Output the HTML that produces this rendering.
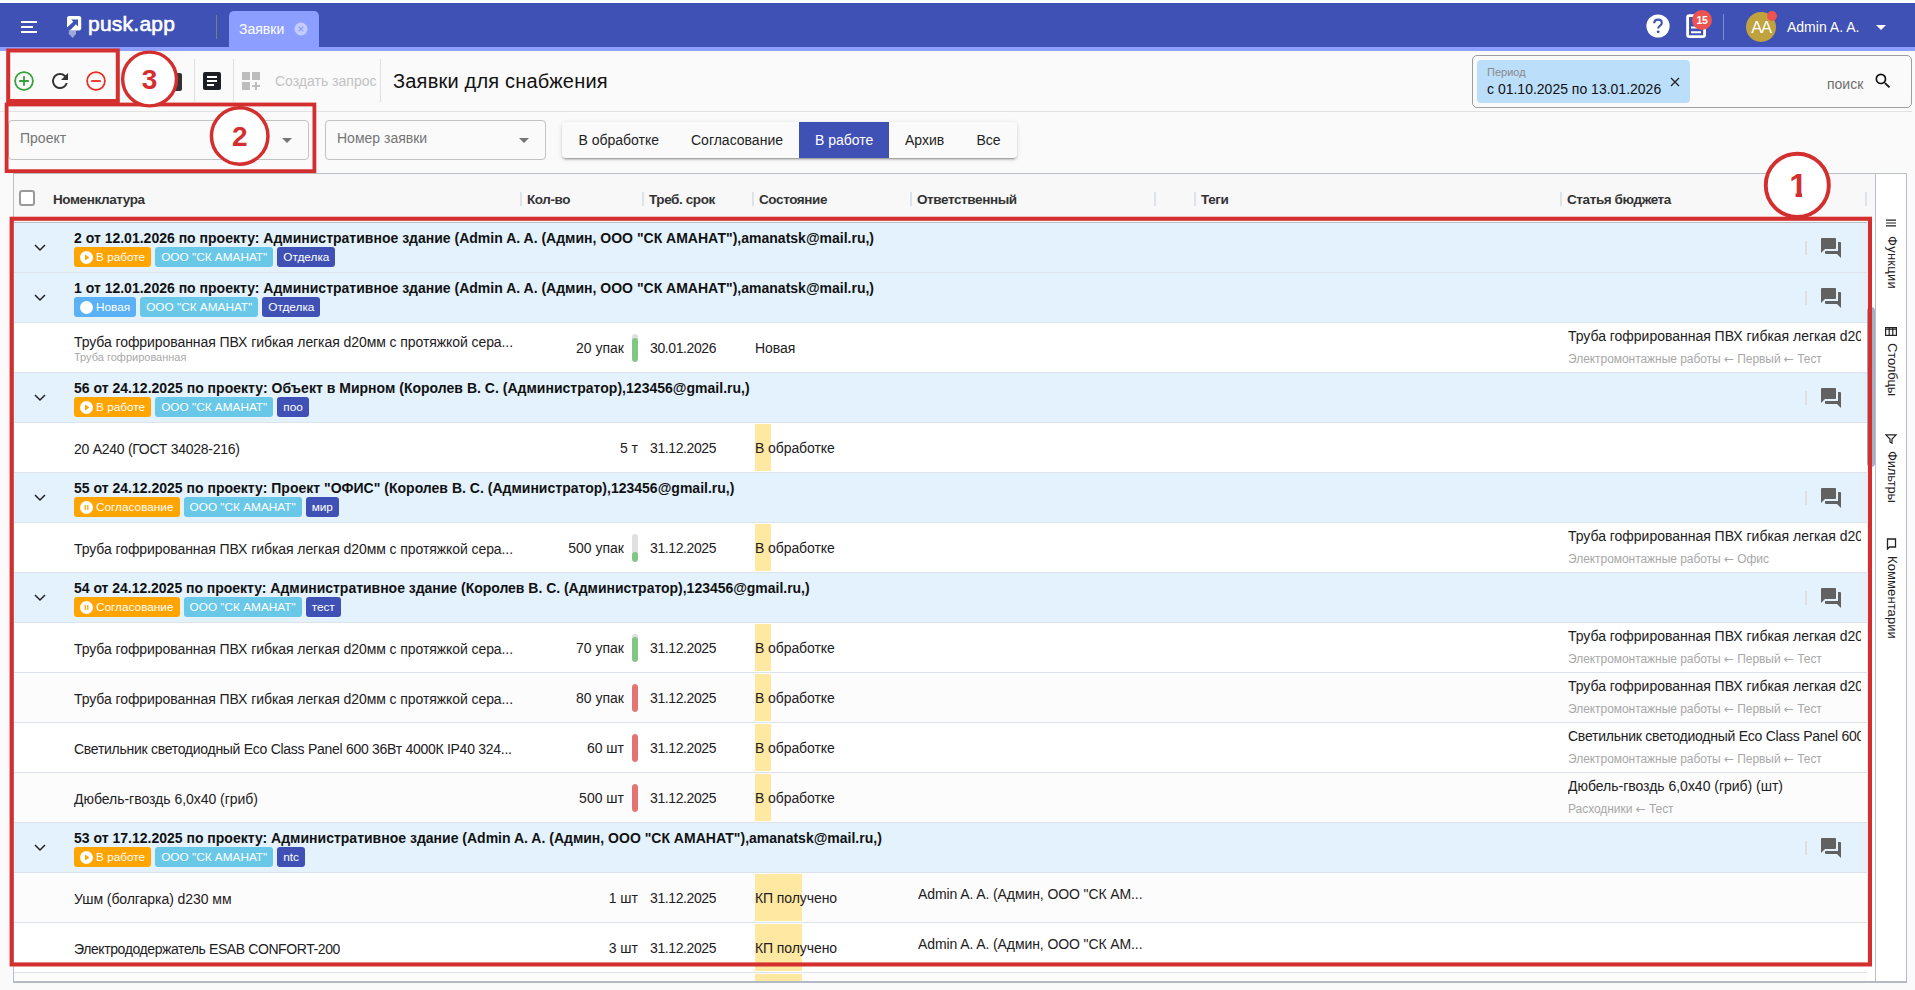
<!DOCTYPE html><html lang="ru"><head><meta charset="utf-8"><title>Заявки для снабжения</title><style>
*{box-sizing:border-box}
html,body{margin:0;padding:0;overflow:hidden}
body{width:1915px;height:990px;overflow:hidden;background:#fafafa;position:relative;font-family:"Liberation Sans",sans-serif;font-size:14px;color:#212121}
.abs{position:absolute}
#top{position:absolute;left:0;top:0;width:1915px;height:3px;background:#fff}
#hdr{position:absolute;left:0;top:3px;width:1915px;height:44px;background:#3f51b5}
#stripe{position:absolute;left:0;top:47px;width:1915px;height:4px;background:#8c9eff}
.t{position:absolute;white-space:nowrap;line-height:16px}
.w{color:#fff}
#tab{position:absolute;left:229px;top:11px;width:90px;height:37px;background:#8c9eff;border-radius:5px 5px 0 0}
.vd{position:absolute;width:1px;background:#e0e0e0}
#tbline{position:absolute;left:0;top:111px;width:1912px;height:1px;background:#e2e2e2}
.sel{position:absolute;height:40px;top:120px;border:1px solid #c2c2c2;border-radius:4px;background:#fafafa}
.arr{position:absolute;width:0;height:0;border-left:5px solid transparent;border-right:5px solid transparent;border-top:5px solid #757575}
#bg{position:absolute;left:562px;top:122px;width:455px;height:36px;background:#fafafa;border-radius:4px;box-shadow:0 3px 1px -2px rgba(0,0,0,.2),0 2px 2px 0 rgba(0,0,0,.14),0 1px 5px 0 rgba(0,0,0,.12)}
#bg .on{position:absolute;left:237px;top:0;width:90px;height:36px;background:#3f51b5}
#grid{position:absolute;left:13px;top:173px;width:1894px;height:810px;border:1px solid #babfc7;border-bottom:2px solid #b4bac4;background:#fff;overflow:hidden}
#gh{position:absolute;left:0;top:0;width:1861px;height:49px;background:#f8f8f8;border-bottom:1px solid #babfc7}
.hs{position:absolute;top:18px;width:2px;height:14px;background:#dde2eb}
.ht{position:absolute;top:18px;font-weight:700;font-size:13.5px;letter-spacing:-0.4px;line-height:16px;color:#333;white-space:nowrap}
.row{position:absolute;left:0;width:1853px;height:50px;border-bottom:1px solid #dde2eb;background:#fff;font-family:"Liberation Sans",sans-serif}
.row.alt{background:#fcfcfc}
.row.g{background:#e3f2fd}
.gt{position:absolute;left:60px;top:7px;font-weight:700;font-size:14px;line-height:16px;white-space:nowrap;color:#111}
.bd{position:absolute;top:25px;height:20px;border-radius:3px;color:#fff;font-size:11.8px;line-height:20px;white-space:nowrap;padding:0 6px}
.b-w{background:#ffa400}
.b-n{background:#5bb1f6}
.b-c{background:#69c8e8}
.b-t{background:#3f51b5}
.ic{display:inline-block;vertical-align:top;width:13px;height:13px;border-radius:50%;background:#fff;margin:3.5px 3.5px 0 -0.5px;position:relative}
.c{position:absolute;white-space:nowrap;font-size:14px;line-height:16px;color:#1c2022;overflow:hidden}
.sub{position:absolute;white-space:nowrap;color:#a8a8a8;overflow:hidden}
.bar{position:absolute;left:618px;top:11px;width:6px;height:28px;border-radius:3px;background:#e0e0e0;overflow:hidden}
.bar i{position:absolute;left:0;bottom:0;width:6px;border-radius:3px}
.hl{position:absolute;left:741px;top:1px;height:46.5px;background:#ffe8a1}
.msep{position:absolute;left:1791px;top:18px;width:2px;height:14px;background:#e3dede}
#side{position:absolute;left:1861px;top:0;width:31px;height:807px;border-left:1px solid #babfc7;background:#fff}
.sv{position:absolute;left:1px;width:30px;writing-mode:vertical-rl;font-size:13px;line-height:30px;color:#222;white-space:nowrap}
.rb{position:absolute;border:4px solid #d32f2f}
.rc{position:absolute;border:3.6px solid #d32f2f;border-radius:50%;background:#fff;color:#d32f2f;font-weight:700;text-align:center}
</style></head><body>
<div id="top"></div><div id="hdr"></div><div id="stripe"></div>
<div class="abs" style="left:21px;top:21px;width:16px;height:2px;background:#fff"></div>
<div class="abs" style="left:21px;top:26px;width:12px;height:2px;background:#fff"></div>
<div class="abs" style="left:21px;top:31px;width:16px;height:2px;background:#fff"></div>
<svg class="abs" style="left:66px;top:15px" width="18" height="24" viewBox="0 0 18 24"><path d="M3.5 15.5 L10 15.5 L10 19 L6.5 23 L2.5 18.5 Z" fill="#9fa8da"/><rect x="1" y="1" width="14.2" height="14.5" rx="2.2" fill="#fff"/><path d="M5.2 4.6 L12 4.6 L12 11.4 L9.9 9.3 L5.2 14.2 L3.2 15.5 L1 15.5 L1 12.4 L7.3 6.7 Z" fill="#3f51b5"/></svg>
<div class="t w" style="left:88px;top:12px;font-size:21px;line-height:24px;font-weight:400;-webkit-text-stroke:0.6px #fff;letter-spacing:0.25px">pusk.app</div>
<div class="abs" style="left:216px;top:15px;width:1px;height:24px;background:#6f8478"></div>
<div id="tab"></div>
<div class="t w" style="left:239px;top:21px;font-size:14px">Заявки</div>
<svg class="abs" style="left:294px;top:22px" width="14" height="14" viewBox="0 0 14 14"><circle cx="7" cy="7" r="6.5" fill="#c5cdff"/><path d="M4.6 4.6 L9.4 9.4 M9.4 4.6 L4.6 9.4" stroke="#8c9eff" stroke-width="1.3"/></svg>
<svg class="abs" style="left:1646px;top:14px" width="24" height="24" viewBox="0 0 24 24"><circle cx="12" cy="12" r="11.6" fill="#fff"/><path d="M8.2 9.3 C8.2 6.9 9.9 5.6 12 5.6 C14.2 5.6 15.8 7 15.8 8.9 C15.8 11.6 12.2 11.9 12.2 14.6" fill="none" stroke="#3f51b5" stroke-width="2.1"/><circle cx="12.2" cy="17.8" r="1.4" fill="#3f51b5"/></svg>
<svg class="abs" style="left:1685px;top:13px" width="24" height="26" viewBox="0 0 24 26"><rect x="2.6" y="2.6" width="17" height="21" rx="1.8" fill="none" stroke="#fff" stroke-width="2.8"/><path d="M6 14.5 H16 M6 19.3 H16" stroke="#fff" stroke-width="2"/></svg>
<div class="abs" style="left:1692px;top:10px;width:20px;height:20px;border-radius:50%;background:#ef5350"></div>
<div class="t w" style="left:1692px;top:12px;width:20px;text-align:center;font-size:10.5px;font-weight:700;letter-spacing:-0.3px">15</div>
<div class="abs" style="left:1723px;top:14px;width:1px;height:26px;background:#7f8bd0"></div>
<div class="abs" style="left:1746px;top:12px;width:30px;height:30px;border-radius:50%;background:#c0a23e"></div>
<div class="t w" style="left:1746px;top:18px;width:30px;text-align:center;font-size:16.5px;line-height:18px;letter-spacing:-1.2px">AA</div>
<div class="abs" style="left:1767px;top:11px;width:10px;height:10px;border-radius:50%;background:#ef5350"></div>
<div class="t w" style="left:1787px;top:19px;font-size:14px">Admin A. A.</div>
<div class="abs" style="left:1876px;top:25px;width:0;height:0;border-left:5px solid transparent;border-right:5px solid transparent;border-top:5px solid #fff"></div>
<svg class="abs" style="left:12px;top:69px" width="24" height="24" viewBox="0 0 24 24"><circle cx="12" cy="12" r="8.9" fill="none" stroke="#34a03c" stroke-width="1.7"/><path d="M12 7.2 V16.8 M7.2 12 H16.8" stroke="#34a03c" stroke-width="1.8"/></svg>
<svg class="abs" style="left:48px;top:69px" width="24" height="24" viewBox="0 0 24 24"><path d="M17.65 6.35A7.958 7.958 0 0 0 12 4a8 8 0 1 0 7.73 10h-2.08A5.99 5.99 0 0 1 12 18c-3.31 0-6-2.69-6-6s2.69-6 6-6c1.66 0 3.14.69 4.22 1.78L13 11h7V4l-2.35 2.35z" fill="#333"/></svg>
<svg class="abs" style="left:84px;top:69px" width="24" height="24" viewBox="0 0 24 24"><circle cx="12" cy="12" r="8.9" fill="none" stroke="#f3281d" stroke-width="1.7"/><path d="M7.2 12 H16.8" stroke="#f3281d" stroke-width="1.8"/></svg>
<svg class="abs" style="left:160.8px;top:69.5px" width="24" height="24" viewBox="0 0 24 24"><path d="M19 3h-4.18C14.4 1.84 13.3 1 12 1s-2.4.84-2.82 2H5c-1.1 0-2 .9-2 2v14c0 1.1.9 2 2 2h14c1.1 0 2-.9 2-2V5c0-1.1-.9-2-2-2zm-7 0c.55 0 1 .45 1 1s-.45 1-1 1-1-.45-1-1 .45-1 1-1z" fill="#333"/></svg>
<div class="vd" style="left:194px;top:59px;height:43px"></div>
<div class="vd" style="left:233px;top:59px;height:43px"></div>
<div class="vd" style="left:380px;top:59px;height:43px"></div>
<svg class="abs" style="left:199.6px;top:69px" width="24" height="24" viewBox="0 0 24 24"><rect x="3" y="3" width="18" height="18" rx="2" fill="#1b1e22"/><path d="M7 8 H17 M7 12 H17 M7 16 H14" stroke="#fff" stroke-width="2"/></svg>
<svg class="abs" style="left:239px;top:69px" width="24" height="24" viewBox="0 0 24 24"><path d="M3 3h8v8H3zM13 3h8v8h-8zM3 13h8v8H3zM18 13h-2v3h-3v2h3v3h2v-3h3v-2h-3z" fill="#bdbdbd"/></svg>
<div class="t" style="left:275px;top:73px;font-size:14px;color:#c2c2c2">Создать запрос</div>
<div class="t" style="left:393px;top:69px;font-size:20px;line-height:24px;color:#111;letter-spacing:0.2px">Заявки для снабжения</div>
<div class="abs" style="left:1472px;top:55px;width:440px;height:53px;border:1px solid #9e9e9e;border-radius:5px"></div>
<div class="abs" style="left:1477px;top:60px;width:213px;height:43px;border-radius:4px;background:#bbdefb"></div>
<div class="t" style="left:1487px;top:65px;font-size:11px;line-height:14px;color:#8a8a8a">Период</div>
<div class="t" style="left:1487px;top:81px;font-size:14px;color:#111">с 01.10.2025 по 13.01.2026</div>
<svg class="abs" style="left:1670px;top:77px" width="10" height="10" viewBox="0 0 10 10"><path d="M1 1 L9 9 M9 1 L1 9" stroke="#222" stroke-width="1.3"/></svg>
<div class="t" style="left:1827px;top:76px;font-size:14px;color:#6e6e6e">поиск</div>
<svg class="abs" style="left:1872.5px;top:71px" width="20" height="20" viewBox="0 0 24 24"><path d="M15.5 14h-.79l-.28-.27A6.471 6.471 0 0 0 16 9.5 6.5 6.5 0 1 0 9.5 16c1.61 0 3.09-.59 4.23-1.57l.27.28v.79l5 4.99L20.49 19l-4.99-5zm-6 0C7.01 14 5 11.99 5 9.5S7.01 5 9.5 5 14 7.01 14 9.5 11.99 14 9.5 14z" fill="#111"/></svg>
<div id="tbline"></div>
<div class="sel" style="left:8px;width:301px"></div>
<div class="t" style="left:20px;top:130px;color:#757575">Проект</div>
<div class="arr" style="left:282px;top:138px"></div>
<div class="sel" style="left:325px;width:221px"></div>
<div class="t" style="left:337px;top:130px;color:#757575">Номер заявки</div>
<div class="arr" style="left:519px;top:138px"></div>
<div id="bg"><div class="on"></div></div>
<div class="t" style="left:578.5px;top:132px;color:#222">В обработке</div>
<div class="t" style="left:691px;top:132px;color:#222">Согласование</div>
<div class="t" style="left:815px;top:132px;color:#fff">В работе</div>
<div class="t" style="left:905px;top:132px;color:#222">Архив</div>
<div class="t" style="left:976.5px;top:132px;color:#222">Все</div>
<div id="grid">
<div id="gh"></div>
<div class="abs" style="left:5px;top:16px;width:16px;height:16px;border:2px solid #999;border-radius:3px;background:#fff"></div>
<div class="hs" style="left:506px"></div>
<div class="hs" style="left:628px"></div>
<div class="hs" style="left:738px"></div>
<div class="hs" style="left:896px"></div>
<div class="hs" style="left:1140px"></div>
<div class="hs" style="left:1180px"></div>
<div class="hs" style="left:1546px"></div>
<div class="hs" style="left:1851px"></div>
<div class="ht" style="left:39px">Номенклатура</div>
<div class="ht" style="left:513px">Кол-во</div>
<div class="ht" style="left:635px">Треб. срок</div>
<div class="ht" style="left:745px">Состояние</div>
<div class="ht" style="left:903px">Ответственный</div>
<div class="ht" style="left:1187px">Теги</div>
<div class="ht" style="left:1553px">Статья бюджета</div>
<div class="row g" style="top:49px">
<svg class="abs" style="left:20px;top:20.5px" width="12" height="8" viewBox="0 0 12 8"><path d="M1 1 L6 6 L11 1" fill="none" stroke="#222" stroke-width="1.5"/></svg>
<div class="gt" style="letter-spacing:0.004px">2 от 12.01.2026 по проекту: Административное здание (Admin A. A. (Админ, ООО "СК АМАНАТ"),amanatsk@mail.ru,)</div>
<div class="abs" style="left:60px;top:24px;white-space:nowrap;font-size:0">
<span class="bd b-w" style="position:static;display:inline-block;margin-right:4px;vertical-align:top"><span class="ic"><svg style="position:absolute;left:0;top:0" width="13" height="13" viewBox="0 0 13 13"><path d="M5 3.6 L9.4 6.5 L5 9.4 Z" fill="#ffa400"/></svg></span>В работе</span>
<span class="bd b-c" style="position:static;display:inline-block;margin-right:4px;vertical-align:top">ООО "СК АМАНАТ"</span>
<span class="bd b-t" style="position:static;display:inline-block;vertical-align:top">Отделка</span>
</div>
<div class="msep"></div>
<svg class="abs" style="left:1805px;top:13px" width="24" height="24" viewBox="0 0 24 24"><path d="M21 6h-2v9H6v2c0 .55.45 1 1 1h11l4 4V7c0-.55-.45-1-1-1zm-4 6V3c0-.55-.45-1-1-1H3c-.55 0-1 .45-1 1v14l4-4h10c.55 0 1-.45 1-1z" fill="#616161"/></svg>
</div>
<div class="row g" style="top:99px">
<svg class="abs" style="left:20px;top:20.5px" width="12" height="8" viewBox="0 0 12 8"><path d="M1 1 L6 6 L11 1" fill="none" stroke="#222" stroke-width="1.5"/></svg>
<div class="gt" style="letter-spacing:0.004px">1 от 12.01.2026 по проекту: Административное здание (Admin A. A. (Админ, ООО "СК АМАНАТ"),amanatsk@mail.ru,)</div>
<div class="abs" style="left:60px;top:24px;white-space:nowrap;font-size:0">
<span class="bd b-n" style="position:static;display:inline-block;margin-right:4px;vertical-align:top"><span class="ic"></span>Новая</span>
<span class="bd b-c" style="position:static;display:inline-block;margin-right:4px;vertical-align:top">ООО "СК АМАНАТ"</span>
<span class="bd b-t" style="position:static;display:inline-block;vertical-align:top">Отделка</span>
</div>
<div class="msep"></div>
<svg class="abs" style="left:1805px;top:13px" width="24" height="24" viewBox="0 0 24 24"><path d="M21 6h-2v9H6v2c0 .55.45 1 1 1h11l4 4V7c0-.55-.45-1-1-1zm-4 6V3c0-.55-.45-1-1-1H3c-.55 0-1 .45-1 1v14l4-4h10c.55 0 1-.45 1-1z" fill="#616161"/></svg>
</div>
<div class="row" style="top:149px">
<div class="c" style="left:60px;top:11px;letter-spacing:-0.076px">Труба гофрированная ПВХ гибкая легкая d20мм с протяжкой сера...</div>
<div class="sub" style="left:60px;top:27px;font-size:11px;line-height:14px">Труба гофрированная</div>
<div class="bar"><i style="height:24px;background:#81c784"></i></div>
<div class="c" style="right:1243px;top:17px">20 упак</div>
<div class="c" style="left:636px;top:17px;letter-spacing:-0.4px">30.01.2026</div>
<div class="c" style="left:741px;top:17px;letter-spacing:-0.08px">Новая</div>
<div class="c" style="left:1554px;top:5px;width:293px;text-overflow:clip;letter-spacing:-0.02px">Труба гофрированная ПВХ гибкая легкая d20мм с протяжкой серая</div>
<div class="sub" style="left:1554px;top:29px;font-size:12px;line-height:14px;letter-spacing:-0.05px">Электромонтажные работы <span style="font-family:'DejaVu Sans',sans-serif">←</span> Первый <span style="font-family:'DejaVu Sans',sans-serif">←</span> Тест</div>
</div>
<div class="row g" style="top:199px">
<svg class="abs" style="left:20px;top:20.5px" width="12" height="8" viewBox="0 0 12 8"><path d="M1 1 L6 6 L11 1" fill="none" stroke="#222" stroke-width="1.5"/></svg>
<div class="gt" style="letter-spacing:0.017px">56 от 24.12.2025 по проекту: Объект в Мирном (Королев В. С. (Администратор),123456@gmail.ru,)</div>
<div class="abs" style="left:60px;top:24px;white-space:nowrap;font-size:0">
<span class="bd b-w" style="position:static;display:inline-block;margin-right:4px;vertical-align:top"><span class="ic"><svg style="position:absolute;left:0;top:0" width="13" height="13" viewBox="0 0 13 13"><path d="M5 3.6 L9.4 6.5 L5 9.4 Z" fill="#ffa400"/></svg></span>В работе</span>
<span class="bd b-c" style="position:static;display:inline-block;margin-right:4px;vertical-align:top">ООО "СК АМАНАТ"</span>
<span class="bd b-t" style="position:static;display:inline-block;vertical-align:top">поо</span>
</div>
<div class="msep"></div>
<svg class="abs" style="left:1805px;top:13px" width="24" height="24" viewBox="0 0 24 24"><path d="M21 6h-2v9H6v2c0 .55.45 1 1 1h11l4 4V7c0-.55-.45-1-1-1zm-4 6V3c0-.55-.45-1-1-1H3c-.55 0-1 .45-1 1v14l4-4h10c.55 0 1-.45 1-1z" fill="#616161"/></svg>
</div>
<div class="row" style="top:249px">
<div class="c" style="left:60px;top:18px;letter-spacing:-0.267px">20 А240 (ГОСТ 34028-216)</div>
<div class="hl" style="width:16px"></div>
<div class="c" style="right:1229px;top:17px">5 т</div>
<div class="c" style="left:636px;top:17px;letter-spacing:-0.4px">31.12.2025</div>
<div class="c" style="left:741px;top:17px;letter-spacing:-0.08px">В обработке</div>
</div>
<div class="row g" style="top:299px">
<svg class="abs" style="left:20px;top:20.5px" width="12" height="8" viewBox="0 0 12 8"><path d="M1 1 L6 6 L11 1" fill="none" stroke="#222" stroke-width="1.5"/></svg>
<div class="gt" style="letter-spacing:0.01px">55 от 24.12.2025 по проекту: Проект "ОФИС" (Королев В. С. (Администратор),123456@gmail.ru,)</div>
<div class="abs" style="left:60px;top:24px;white-space:nowrap;font-size:0">
<span class="bd b-w" style="position:static;display:inline-block;margin-right:4px;vertical-align:top"><span class="ic"><svg style="position:absolute;left:0;top:0" width="13" height="13" viewBox="0 0 13 13"><path d="M5.2 4 V9 M7.8 4 V9" stroke="#ffa400" stroke-width="1.3"/></svg></span>Согласование</span>
<span class="bd b-c" style="position:static;display:inline-block;margin-right:4px;vertical-align:top">ООО "СК АМАНАТ"</span>
<span class="bd b-t" style="position:static;display:inline-block;vertical-align:top">мир</span>
</div>
<div class="msep"></div>
<svg class="abs" style="left:1805px;top:13px" width="24" height="24" viewBox="0 0 24 24"><path d="M21 6h-2v9H6v2c0 .55.45 1 1 1h11l4 4V7c0-.55-.45-1-1-1zm-4 6V3c0-.55-.45-1-1-1H3c-.55 0-1 .45-1 1v14l4-4h10c.55 0 1-.45 1-1z" fill="#616161"/></svg>
</div>
<div class="row" style="top:349px">
<div class="c" style="left:60px;top:18px;letter-spacing:-0.076px">Труба гофрированная ПВХ гибкая легкая d20мм с протяжкой сера...</div>
<div class="hl" style="width:16px"></div>
<div class="bar"><i style="height:10px;background:#81c784"></i></div>
<div class="c" style="right:1243px;top:17px">500 упак</div>
<div class="c" style="left:636px;top:17px;letter-spacing:-0.4px">31.12.2025</div>
<div class="c" style="left:741px;top:17px;letter-spacing:-0.08px">В обработке</div>
<div class="c" style="left:1554px;top:5px;width:293px;text-overflow:clip;letter-spacing:-0.02px">Труба гофрированная ПВХ гибкая легкая d20мм с протяжкой серая</div>
<div class="sub" style="left:1554px;top:29px;font-size:12px;line-height:14px;letter-spacing:-0.05px">Электромонтажные работы <span style="font-family:'DejaVu Sans',sans-serif">←</span> Офис</div>
</div>
<div class="row g" style="top:399px">
<svg class="abs" style="left:20px;top:20.5px" width="12" height="8" viewBox="0 0 12 8"><path d="M1 1 L6 6 L11 1" fill="none" stroke="#222" stroke-width="1.5"/></svg>
<div class="gt" style="letter-spacing:-0.021px">54 от 24.12.2025 по проекту: Административное здание (Королев В. С. (Администратор),123456@gmail.ru,)</div>
<div class="abs" style="left:60px;top:24px;white-space:nowrap;font-size:0">
<span class="bd b-w" style="position:static;display:inline-block;margin-right:4px;vertical-align:top"><span class="ic"><svg style="position:absolute;left:0;top:0" width="13" height="13" viewBox="0 0 13 13"><path d="M5.2 4 V9 M7.8 4 V9" stroke="#ffa400" stroke-width="1.3"/></svg></span>Согласование</span>
<span class="bd b-c" style="position:static;display:inline-block;margin-right:4px;vertical-align:top">ООО "СК АМАНАТ"</span>
<span class="bd b-t" style="position:static;display:inline-block;vertical-align:top">тест</span>
</div>
<div class="msep"></div>
<svg class="abs" style="left:1805px;top:13px" width="24" height="24" viewBox="0 0 24 24"><path d="M21 6h-2v9H6v2c0 .55.45 1 1 1h11l4 4V7c0-.55-.45-1-1-1zm-4 6V3c0-.55-.45-1-1-1H3c-.55 0-1 .45-1 1v14l4-4h10c.55 0 1-.45 1-1z" fill="#616161"/></svg>
</div>
<div class="row" style="top:449px">
<div class="c" style="left:60px;top:18px;letter-spacing:-0.076px">Труба гофрированная ПВХ гибкая легкая d20мм с протяжкой сера...</div>
<div class="hl" style="width:16px"></div>
<div class="bar"><i style="height:25px;background:#81c784"></i></div>
<div class="c" style="right:1243px;top:17px">70 упак</div>
<div class="c" style="left:636px;top:17px;letter-spacing:-0.4px">31.12.2025</div>
<div class="c" style="left:741px;top:17px;letter-spacing:-0.08px">В обработке</div>
<div class="c" style="left:1554px;top:5px;width:293px;text-overflow:clip;letter-spacing:-0.02px">Труба гофрированная ПВХ гибкая легкая d20мм с протяжкой серая</div>
<div class="sub" style="left:1554px;top:29px;font-size:12px;line-height:14px;letter-spacing:-0.05px">Электромонтажные работы <span style="font-family:'DejaVu Sans',sans-serif">←</span> Первый <span style="font-family:'DejaVu Sans',sans-serif">←</span> Тест</div>
</div>
<div class="row alt" style="top:499px">
<div class="c" style="left:60px;top:18px;letter-spacing:-0.076px">Труба гофрированная ПВХ гибкая легкая d20мм с протяжкой сера...</div>
<div class="hl" style="width:16px"></div>
<div class="bar"><i style="height:28px;background:#e57373"></i></div>
<div class="c" style="right:1243px;top:17px">80 упак</div>
<div class="c" style="left:636px;top:17px;letter-spacing:-0.4px">31.12.2025</div>
<div class="c" style="left:741px;top:17px;letter-spacing:-0.08px">В обработке</div>
<div class="c" style="left:1554px;top:5px;width:293px;text-overflow:clip;letter-spacing:-0.02px">Труба гофрированная ПВХ гибкая легкая d20мм с протяжкой серая</div>
<div class="sub" style="left:1554px;top:29px;font-size:12px;line-height:14px;letter-spacing:-0.05px">Электромонтажные работы <span style="font-family:'DejaVu Sans',sans-serif">←</span> Первый <span style="font-family:'DejaVu Sans',sans-serif">←</span> Тест</div>
</div>
<div class="row" style="top:549px">
<div class="c" style="left:60px;top:18px;letter-spacing:-0.278px">Светильник светодиодный Eco Class Panel 600 36Вт 4000К IP40 324...</div>
<div class="hl" style="width:16px"></div>
<div class="bar"><i style="height:28px;background:#e57373"></i></div>
<div class="c" style="right:1243px;top:17px">60 шт</div>
<div class="c" style="left:636px;top:17px;letter-spacing:-0.4px">31.12.2025</div>
<div class="c" style="left:741px;top:17px;letter-spacing:-0.08px">В обработке</div>
<div class="c" style="left:1554px;top:5px;width:293px;text-overflow:clip;letter-spacing:-0.24px">Светильник светодиодный Eco Class Panel 600 36Вт 4000К</div>
<div class="sub" style="left:1554px;top:29px;font-size:12px;line-height:14px;letter-spacing:-0.05px">Электромонтажные работы <span style="font-family:'DejaVu Sans',sans-serif">←</span> Первый <span style="font-family:'DejaVu Sans',sans-serif">←</span> Тест</div>
</div>
<div class="row alt" style="top:599px">
<div class="c" style="left:60px;top:18px;letter-spacing:-0.028px">Дюбель-гвоздь 6,0х40 (гриб)</div>
<div class="hl" style="width:16px"></div>
<div class="bar"><i style="height:28px;background:#e57373"></i></div>
<div class="c" style="right:1243px;top:17px">500 шт</div>
<div class="c" style="left:636px;top:17px;letter-spacing:-0.4px">31.12.2025</div>
<div class="c" style="left:741px;top:17px;letter-spacing:-0.08px">В обработке</div>
<div class="c" style="left:1554px;top:5px;width:293px;text-overflow:clip;letter-spacing:-0.02px">Дюбель-гвоздь 6,0х40 (гриб) (шт)</div>
<div class="sub" style="left:1554px;top:29px;font-size:12px;line-height:14px;letter-spacing:-0.05px">Расходники <span style="font-family:'DejaVu Sans',sans-serif">←</span> Тест</div>
</div>
<div class="row g" style="top:649px">
<svg class="abs" style="left:20px;top:20.5px" width="12" height="8" viewBox="0 0 12 8"><path d="M1 1 L6 6 L11 1" fill="none" stroke="#222" stroke-width="1.5"/></svg>
<div class="gt" style="letter-spacing:0.004px">53 от 17.12.2025 по проекту: Административное здание (Admin A. A. (Админ, ООО "СК АМАНАТ"),amanatsk@mail.ru,)</div>
<div class="abs" style="left:60px;top:24px;white-space:nowrap;font-size:0">
<span class="bd b-w" style="position:static;display:inline-block;margin-right:4px;vertical-align:top"><span class="ic"><svg style="position:absolute;left:0;top:0" width="13" height="13" viewBox="0 0 13 13"><path d="M5 3.6 L9.4 6.5 L5 9.4 Z" fill="#ffa400"/></svg></span>В работе</span>
<span class="bd b-c" style="position:static;display:inline-block;margin-right:4px;vertical-align:top">ООО "СК АМАНАТ"</span>
<span class="bd b-t" style="position:static;display:inline-block;vertical-align:top">ntc</span>
</div>
<div class="msep"></div>
<svg class="abs" style="left:1805px;top:13px" width="24" height="24" viewBox="0 0 24 24"><path d="M21 6h-2v9H6v2c0 .55.45 1 1 1h11l4 4V7c0-.55-.45-1-1-1zm-4 6V3c0-.55-.45-1-1-1H3c-.55 0-1 .45-1 1v14l4-4h10c.55 0 1-.45 1-1z" fill="#616161"/></svg>
</div>
<div class="row alt" style="top:699px">
<div class="c" style="left:60px;top:18px;letter-spacing:-0.058px">Ушм (болгарка) d230 мм</div>
<div class="hl" style="width:47px"></div>
<div class="c" style="right:1229px;top:17px">1 шт</div>
<div class="c" style="left:636px;top:17px;letter-spacing:-0.4px">31.12.2025</div>
<div class="c" style="left:741px;top:17px;letter-spacing:-0.08px">КП получено</div>
<div class="c" style="left:904px;top:13px;letter-spacing:-0.1px">Admin A. A. (Админ, ООО "СК АМ...</div>
</div>
<div class="row" style="top:749px">
<div class="c" style="left:60px;top:18px;letter-spacing:-0.404px">Электрододержатель ESAB CONFORT-200</div>
<div class="hl" style="width:47px"></div>
<div class="c" style="right:1229px;top:17px">3 шт</div>
<div class="c" style="left:636px;top:17px;letter-spacing:-0.4px">31.12.2025</div>
<div class="c" style="left:741px;top:17px;letter-spacing:-0.08px">КП получено</div>
<div class="c" style="left:904px;top:13px;letter-spacing:-0.1px">Admin A. A. (Админ, ООО "СК АМ...</div>
</div>
<div class="row alt" style="top:799px">
<div class="hl" style="width:47px"></div>
</div>
<div class="abs" style="left:1853px;top:48px;width:8px;height:759px;background:#fff"></div>
<div class="abs" style="left:1853px;top:133px;width:8px;height:160px;border-radius:4px;background:#a3afc4"></div>
<div id="side">
<svg class="abs" style="left:9px;top:45px" width="12" height="8" viewBox="0 0 12 8"><path d="M1 1.2H11M1 4H11M1 6.8H11" stroke="#222" stroke-width="1.2"/></svg>
<div class="sv" style="top:61.5px;letter-spacing:0.25px">Функции</div>
<svg class="abs" style="left:9px;top:153px" width="12" height="9" viewBox="0 0 12 9"><rect x="0.6" y="0.6" width="10.8" height="7.8" fill="none" stroke="#222" stroke-width="1.2"/><path d="M0.6 2.2H11.4M4.2 0.6V8.4M7.8 0.6V8.4" stroke="#222" stroke-width="1.2"/></svg>
<div class="sv" style="top:169px;letter-spacing:-0.15px">Столбцы</div>
<svg class="abs" style="left:9px;top:260px" width="12" height="10" viewBox="0 0 12 10"><path d="M0.8 0.8 H11.2 L7 5 V9.2 L5 8 V5 Z" fill="none" stroke="#222" stroke-width="1.2"/></svg>
<div class="sv" style="top:277px;letter-spacing:-0.2px">Фильтры</div>
<svg class="abs" style="left:9px;top:364px" width="12" height="12" viewBox="0 0 12 12"><path d="M2.5 1 H10.5 V9 H4.5 L2.5 11 Z" fill="none" stroke="#222" stroke-width="1.3"/></svg>
<div class="sv" style="top:381.5px;letter-spacing:0.1px">Комментарии</div>
</div>
</div>
<svg class="abs" style="left:0;top:0" width="1915" height="990" viewBox="0 0 1915 990"><rect x="8.2" y="50.5" width="109.6" height="50.5" fill="none" stroke="#d32f2f" stroke-width="4.0"/><rect x="6.6" y="104.5" width="307.8" height="66.65000000000002" fill="none" stroke="#d32f2f" stroke-width="3.8"/><rect x="11.649999999999999" y="218.75" width="1858.3000000000002" height="745.6999999999999" fill="none" stroke="#d32f2f" stroke-width="4.1"/><circle cx="149.55" cy="79" r="26.900000000000002" fill="#fff" stroke="#d32f2f" stroke-width="3.4"/><text x="149.55" y="89" font-size="28" font-weight="700" text-anchor="middle" fill="#d32f2f" font-family="Liberation Sans, sans-serif">3</text><circle cx="239.7" cy="135.9" r="28.25" fill="#fff" stroke="#d32f2f" stroke-width="3.5"/><text x="239.7" y="146.1" font-size="28" font-weight="700" text-anchor="middle" fill="#d32f2f" font-family="Liberation Sans, sans-serif">2</text><circle cx="1797.3" cy="185.3" r="31.55" fill="#fff" stroke="#d32f2f" stroke-width="3.9"/><text x="1798.3" y="197.1" font-size="32.5" font-weight="700" text-anchor="middle" fill="#d32f2f" font-family="Liberation Sans, sans-serif">1</text><rect x="1788" y="192.5" width="7.6" height="5.7" fill="#fff"/><rect x="1802" y="192.5" width="7" height="5.7" fill="#fff"/></svg>
</body></html>
